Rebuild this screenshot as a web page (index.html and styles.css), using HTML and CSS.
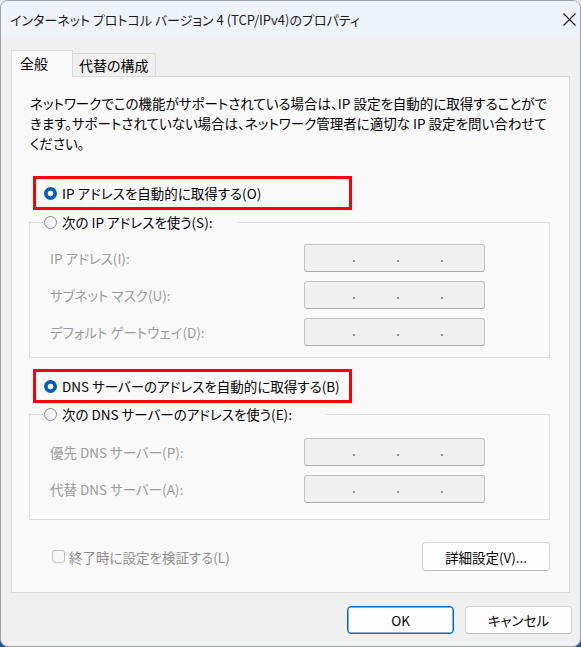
FILE: index.html
```html
<!DOCTYPE html>
<html lang="ja">
<head>
<meta charset="utf-8">
<title>インターネット プロトコル バージョン 4 (TCP/IPv4)のプロパティ</title>
<link rel="stylesheet" href="styles.css">
</head>
<body>
<div class="window">
  <header class="titlebar">
    <span class="title">インターネット プロトコル バージョン 4 (TCP/IPv4)のプロパティ</span>
    <svg class="close" width="13" height="13" viewBox="0 0 13 13" aria-hidden="true"><path d="M0.5 0.5 L12.5 12.5 M12.5 0.5 L0.5 12.5" stroke="#1a1a1a" stroke-width="1.1" fill="none"/></svg>
  </header>
  <main class="content">
    <div class="tabs">
      <div class="tab tab-active">全般</div>
      <div class="tab">代替の構成</div>
    </div>
    <section class="panel">
      <p class="desc">ネットワークでこの機能がサポートされている場合は、IP 設定を自動的に取得することがで<br>きます。サポートされていない場合は、ネットワーク管理者に適切な IP 設定を問い合わせて<br>ください。</p>

      <div class="choice mark-first"><span class="radio radio-on"></span><span>IP アドレスを自動的に取得する(O)</span></div>
      <fieldset class="group group-ip">
        <legend class="legend legend-ip"><span class="radio"></span><span>次の IP アドレスを使う(S):</span></legend>
        <div class="row"><span class="label">IP アドレス(I):</span><span class="ipbox"><i></i><i></i><i></i></span></div>
        <div class="row"><span class="label">サブネット マスク(U):</span><span class="ipbox"><i></i><i></i><i></i></span></div>
        <div class="row"><span class="label">デフォルト ゲートウェイ(D):</span><span class="ipbox"><i></i><i></i><i></i></span></div>
      </fieldset>

      <div class="choice mark-second"><span class="radio radio-on"></span><span>DNS サーバーのアドレスを自動的に取得する(B)</span></div>
      <fieldset class="group group-dns">
        <legend class="legend legend-dns"><span class="radio"></span><span>次の DNS サーバーのアドレスを使う(E):</span></legend>
        <div class="row"><span class="label">優先 DNS サーバー(P):</span><span class="ipbox"><i></i><i></i><i></i></span></div>
        <div class="row"><span class="label">代替 DNS サーバー(A):</span><span class="ipbox"><i></i><i></i><i></i></span></div>
      </fieldset>

      <div class="panel-foot">
        <span class="check"><span class="checkbox"></span><span>終了時に設定を検証する(L)</span></span>
        <button class="btn btn-adv" type="button">詳細設定(V)...</button>
      </div>
    </section>
    <footer class="actions">
      <button class="btn btn-dialog btn-default" type="button">OK</button>
      <button class="btn btn-dialog" type="button">キャンセル</button>
    </footer>
  </main>
</div>
</body>
</html>
```
FILE: styles.css
```css
* { box-sizing: border-box; }

html {
  height: 100%;
  background: linear-gradient(#e4e8ee 0 50%, #1e4ea5 50% 100%);
}

body {
  margin: 0;
  font-family: "Noto Sans CJK JP", "Noto Sans", sans-serif;
  font-size: 13.5px;
  font-feature-settings: "palt";
  color: #000;
}

.window {
  width: 581px;
  height: 647px;
  border: 1px solid #9ea3aa;
  border-radius: 8px;
  background: #f0f0f0;
  overflow: hidden;
  display: flex;
  flex-direction: column;
}

.titlebar {
  height: 37px;
  flex: none;
  background: #eef3f9;
  display: flex;
  align-items: center;
  justify-content: space-between;
  padding: 0 4px 0 9px;
}

.title {
  font-size: 13px;
  color: #1b1b1b;
  white-space: nowrap;
}

.close { display: block; }

.content {
  flex: 1;
  display: flex;
  flex-direction: column;
  padding: 12px 10px 0 10px;
}

.tabs {
  display: flex;
  align-items: flex-end;
  margin-bottom: -1px;
  position: relative;
  z-index: 1;
}

.tab {
  height: 24px;
  padding: 0 6px;
  border: 1px solid #d9d9d9;
  border-left: none;
  background: #f0f0f0;
  line-height: 22px;
  font-size: 14px;
  white-space: nowrap;
}

.tab-active {
  height: 27px;
  width: 62px;
  padding: 0 8px;
  border-left: 1px solid #d9d9d9;
  border-bottom: none;
  background: #f9f9f9;
  line-height: 25px;
}

.panel {
  border: 1px solid #d9d9d9;
  background: #f9f9f9;
  padding: 16px 19px 21px 17px;
}

.desc {
  margin: 0 0 0 1px;
  line-height: 20px;
  white-space: nowrap;
}

.choice {
  width: 319px;
  height: 34px;
  margin-left: 4px;
  border: 3px solid #ff0000;
  display: flex;
  align-items: center;
  gap: 5px;
  padding-left: 8px;
  white-space: nowrap;
}

.mark-first { margin-top: 23px; }
.mark-second { margin-top: 11px; }

.radio {
  width: 13px;
  height: 13px;
  flex: none;
  border-radius: 50%;
  border: 1px solid #8a8a8a;
  background: #f6f6f6;
}

.radio-on {
  border: none;
  background: radial-gradient(circle, #ffffff 0 2.6px, #005fb8 3.2px);
}

.group {
  margin: 0;
  min-width: 0;
  border: 1px solid #dcdcdc;
  padding: 12px 0 11px 13px;
}

.group-ip { margin-top: 2px; }
.group-dns { margin-top: 1px; padding-top: 14px; padding-bottom: 16px; }

.legend {
  height: 20px;
  padding: 0 0 0 1px;
  display: flex;
  align-items: center;
  gap: 5px;
  line-height: 20px;
  white-space: nowrap;
}

.legend-ip { width: 195px; }
.legend-dns { width: 283px; }

.row {
  display: flex;
  align-items: center;
  padding-left: 7px;
}

.row + .row { margin-top: 9px; }

.label {
  width: 254px;
  color: #9b9b9b;
  white-space: nowrap;
}

.ipbox {
  width: 181px;
  height: 28px;
  border: 1px solid #c2c2c2;
  border-bottom-color: #a9a9a9;
  border-radius: 3px;
  background: #f0f0f0;
  display: flex;
  align-items: center;
  justify-content: center;
  gap: 42px;
  padding-left: 6px;
}

.ipbox i {
  width: 2px;
  height: 2px;
  margin-top: 6px;
  background: #8c8c8c;
}

.panel-foot {
  margin-top: 22px;
  display: flex;
  align-items: center;
  justify-content: space-between;
}

.check {
  margin-left: 23px;
  display: flex;
  align-items: center;
  gap: 4px;
  color: #8d8d8d;
  white-space: nowrap;
}

.checkbox {
  width: 13px;
  height: 13px;
  border: 1px solid #c3c3c3;
  border-radius: 3px;
  background: #f7f7f7;
}

.btn {
  font: inherit;
  font-feature-settings: "palt";
  color: #000;
  background: #fdfdfd;
  border: 1px solid #d3d3d3;
  border-bottom-color: #bdbdbd;
  border-radius: 4px;
  padding: 0;
  white-space: nowrap;
}

.btn-adv {
  width: 128px;
  height: 29px;
}

.actions {
  display: flex;
  justify-content: flex-end;
  gap: 11px;
  padding: 13px 0 0 0;
  margin-right: -2px;
}

.btn-dialog {
  width: 107px;
  height: 28px;
}

.btn-default {
  border: 1px solid #0067c0;
  box-shadow: inset 0 0 0 0.5px #0067c0;
}
```
